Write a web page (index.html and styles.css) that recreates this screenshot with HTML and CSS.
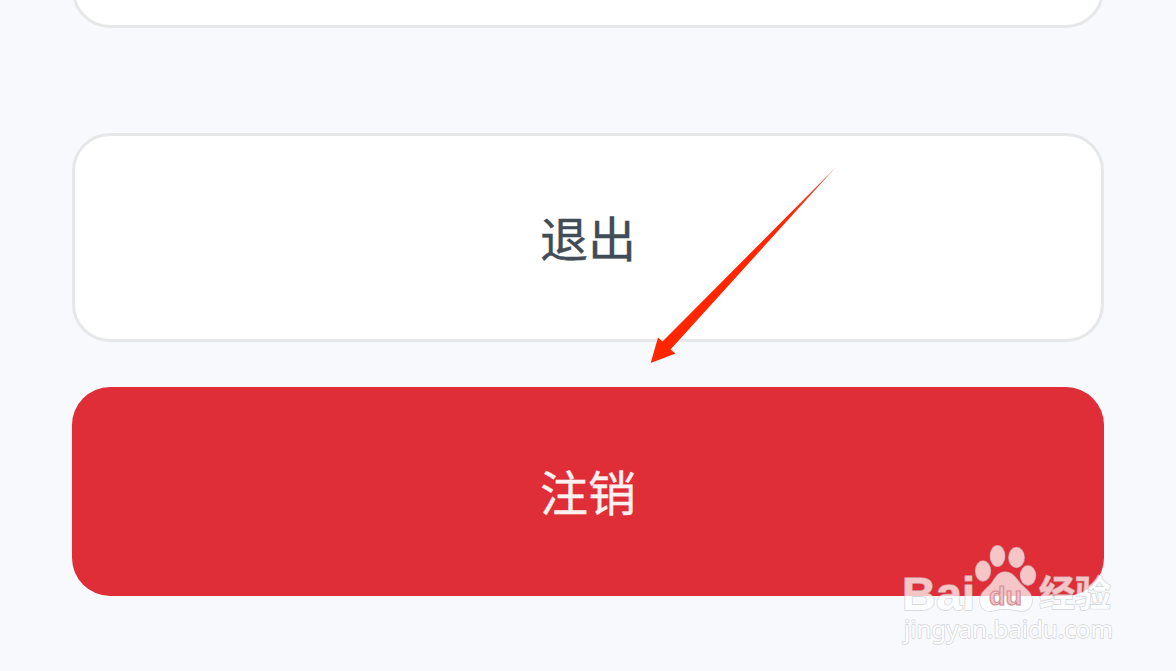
FILE: index.html
```html
<!DOCTYPE html>
<html lang="zh-CN">
<head>
  <meta charset="UTF-8" />
  <meta name="viewport" content="width=device-width, initial-scale=1" />
  <title>账号设置</title>
  <link rel="stylesheet" href="styles.css">
</head>
<body>
  <main class="page">
    <div class="card"></div>
    <div class="actions">
      <button type="button" class="btn btn-logout">退出</button>
      <button type="button" class="btn btn-cancel">注销</button>
    </div>
  </main>

  <svg class="arrow" width="190" height="200" viewBox="0 0 190 200" aria-hidden="true">
    <defs>
      <linearGradient id="arrowFill" gradientUnits="userSpaceOnUse" x1="5" y1="197" x2="188" y2="4">
        <stop offset="0.75" stop-color="#ff2600" />
        <stop offset="1" stop-color="#d9604f" />
      </linearGradient>
    </defs>
    <path d="M3.7 198 L11 172.5 L15.5 176.5 L189 2 L23.5 184.5 L28.5 188.5 Z" fill="url(#arrowFill)" />
  </svg>

  <svg class="watermark" width="230" height="110" viewBox="0 0 230 110" aria-label="Baidu 经验">
    <g class="mark">
      <text class="mark-brand" x="2" y="69.5" textLength="73" lengthAdjust="spacingAndGlyphs">Bai</text>
      <ellipse cx="83" cy="31" rx="7.5" ry="10" />
      <ellipse cx="97.5" cy="16" rx="7.2" ry="10.3" />
      <ellipse cx="116.5" cy="17.5" rx="7.7" ry="10" />
      <ellipse cx="128" cy="35.5" rx="7.6" ry="9.7" />
      <path d="M105 32 C112 32 115 37 119 42 C123 48 132 51 132 60 C132 68 127 71.5 120 71 C113 70 110 69 105 69 C99 69 97 70 91 71 C84 72 80 67 80 60 C80 52 88 48 92 43 C96 37 98 32 105 32 Z" />
      <text class="mark-jingyan" x="139" y="67" textLength="72" lengthAdjust="spacingAndGlyphs">经验</text>
      <text class="mark-url" x="4" y="98" textLength="209" lengthAdjust="spacingAndGlyphs">jingyan.baidu.com</text>
    </g>
    <text class="mark-du" x="89" y="65" textLength="33" lengthAdjust="spacingAndGlyphs">du</text>
  </svg>
</body>
</html>
```
FILE: styles.css
```css
* { margin: 0; padding: 0; box-sizing: border-box; }
body {
  position: relative;
  height: 671px;
  overflow: hidden;
  background: #f7f9fd;
  font-family: 'Noto Sans CJK SC', sans-serif;
}
.page { display: flex; flex-direction: column; padding: 0 72px; }
.card {
  height: 100px;
  margin-top: -72px;
  background: #fff;
  border: 3px solid #e6e7e9;
  border-radius: 38px;
}
.actions { display: flex; flex-direction: column; gap: 45px; margin-top: 105px; }
.btn {
  width: 100%;
  height: 209px;
  padding-bottom: 4px;
  border: none;
  border-radius: 38px;
  font-family: inherit;
  font-size: 48px;
  font-weight: 400;
  line-height: 1;
  -webkit-text-stroke: 0.4px currentColor;
}
.btn-logout { background: #fff; border: 3px solid #e6e7e9; color: #414c57; }
.btn-cancel { background: #df2e38; color: #fff1ef; }

/* Pointer drawn over the buttons */
.arrow { position: absolute; left: 647px; top: 165px; }

/* Watermark */
.watermark { position: absolute; left: 900px; top: 540px; }
.mark { fill: #fff; stroke: #c6c6c9; stroke-width: 1.4; stroke-linejoin: round; paint-order: stroke; opacity: 0.72; }
.mark-brand { font: bold 47px 'Liberation Sans', sans-serif; }
.mark-jingyan { font: bold 36px 'Noto Sans CJK SC', sans-serif; }
.mark-url { font: 24px 'Noto Sans', sans-serif; }
.mark-du { font: bold 25px 'Liberation Sans', sans-serif; fill: #f3c3c7; stroke: #cf8d92; stroke-width: 1; }
```
